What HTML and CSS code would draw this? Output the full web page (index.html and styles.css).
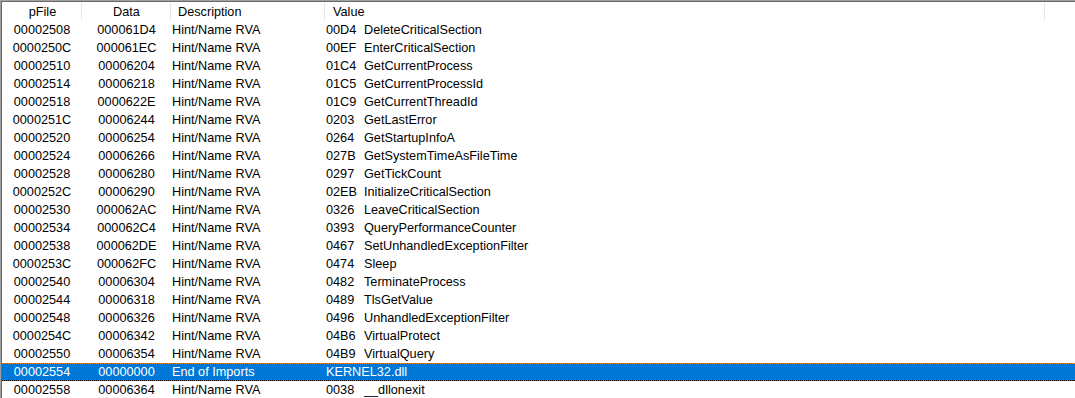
FILE: index.html
```html
<!DOCTYPE html>
<html>
<head>
<meta charset="utf-8">
<link rel="stylesheet" href="styles.css">
</head>
<body>
<div class="frame">
  <div class="inner">
    <div class="row head"><div class="c c1">pFile</div><div class="c c2">Data</div><div class="c c3">Description</div><div class="c c4">Value</div><div class="c c5"></div></div>
    <div class="row"><div class="c c1">00002508</div><div class="c c2">000061D4</div><div class="c c3">Hint/Name RVA</div><div class="c c4"><span class="h">00D4</span>DeleteCriticalSection</div></div>
    <div class="row"><div class="c c1">0000250C</div><div class="c c2">000061EC</div><div class="c c3">Hint/Name RVA</div><div class="c c4"><span class="h">00EF</span>EnterCriticalSection</div></div>
    <div class="row"><div class="c c1">00002510</div><div class="c c2">00006204</div><div class="c c3">Hint/Name RVA</div><div class="c c4"><span class="h">01C4</span>GetCurrentProcess</div></div>
    <div class="row"><div class="c c1">00002514</div><div class="c c2">00006218</div><div class="c c3">Hint/Name RVA</div><div class="c c4"><span class="h">01C5</span>GetCurrentProcessId</div></div>
    <div class="row"><div class="c c1">00002518</div><div class="c c2">0000622E</div><div class="c c3">Hint/Name RVA</div><div class="c c4"><span class="h">01C9</span>GetCurrentThreadId</div></div>
    <div class="row"><div class="c c1">0000251C</div><div class="c c2">00006244</div><div class="c c3">Hint/Name RVA</div><div class="c c4"><span class="h">0203</span>GetLastError</div></div>
    <div class="row"><div class="c c1">00002520</div><div class="c c2">00006254</div><div class="c c3">Hint/Name RVA</div><div class="c c4"><span class="h">0264</span>GetStartupInfoA</div></div>
    <div class="row"><div class="c c1">00002524</div><div class="c c2">00006266</div><div class="c c3">Hint/Name RVA</div><div class="c c4"><span class="h">027B</span>GetSystemTimeAsFileTime</div></div>
    <div class="row"><div class="c c1">00002528</div><div class="c c2">00006280</div><div class="c c3">Hint/Name RVA</div><div class="c c4"><span class="h">0297</span>GetTickCount</div></div>
    <div class="row"><div class="c c1">0000252C</div><div class="c c2">00006290</div><div class="c c3">Hint/Name RVA</div><div class="c c4"><span class="h">02EB</span>InitializeCriticalSection</div></div>
    <div class="row"><div class="c c1">00002530</div><div class="c c2">000062AC</div><div class="c c3">Hint/Name RVA</div><div class="c c4"><span class="h">0326</span>LeaveCriticalSection</div></div>
    <div class="row"><div class="c c1">00002534</div><div class="c c2">000062C4</div><div class="c c3">Hint/Name RVA</div><div class="c c4"><span class="h">0393</span>QueryPerformanceCounter</div></div>
    <div class="row"><div class="c c1">00002538</div><div class="c c2">000062DE</div><div class="c c3">Hint/Name RVA</div><div class="c c4"><span class="h">0467</span>SetUnhandledExceptionFilter</div></div>
    <div class="row"><div class="c c1">0000253C</div><div class="c c2">000062FC</div><div class="c c3">Hint/Name RVA</div><div class="c c4"><span class="h">0474</span>Sleep</div></div>
    <div class="row"><div class="c c1">00002540</div><div class="c c2">00006304</div><div class="c c3">Hint/Name RVA</div><div class="c c4"><span class="h">0482</span>TerminateProcess</div></div>
    <div class="row"><div class="c c1">00002544</div><div class="c c2">00006318</div><div class="c c3">Hint/Name RVA</div><div class="c c4"><span class="h">0489</span>TlsGetValue</div></div>
    <div class="row"><div class="c c1">00002548</div><div class="c c2">00006326</div><div class="c c3">Hint/Name RVA</div><div class="c c4"><span class="h">0496</span>UnhandledExceptionFilter</div></div>
    <div class="row"><div class="c c1">0000254C</div><div class="c c2">00006342</div><div class="c c3">Hint/Name RVA</div><div class="c c4"><span class="h">04B6</span>VirtualProtect</div></div>
    <div class="row"><div class="c c1">00002550</div><div class="c c2">00006354</div><div class="c c3">Hint/Name RVA</div><div class="c c4"><span class="h">04B9</span>VirtualQuery</div></div>
    <div class="row sel"><div class="c c1">00002554</div><div class="c c2">00000000</div><div class="c c3">End of Imports</div><div class="c c4">KERNEL32.dll</div></div>
    <div class="row"><div class="c c1">00002558</div><div class="c c2">00006364</div><div class="c c3">Hint/Name RVA</div><div class="c c4"><span class="h">0038</span>__dllonexit</div></div>
  </div>
</div>
</body>
</html>
```

FILE: styles.css
```css
html, body {
  margin: 0;
  padding: 0;
  background: #ffffff;
  overflow: hidden;
}
body {
  width: 1075px;
  height: 398px;
  font-family: "Liberation Sans", Arial, sans-serif;
  font-size: 12.7px;
  color: #000000;
}
.frame {
  height: 397px;
  border-top: 1px solid #a0a0a0;
  border-left: 1px solid #a0a0a0;
}
.inner {
  height: 396px;
  border-top: 1px solid #696969;
  border-left: 1px solid #696969;
}
.row {
  display: grid;
  grid-template-columns: 80px 89px 154px 720px 1fr;
  height: 18px;
  white-space: nowrap;
}
.c {
  overflow: hidden;
  padding-top: 1px;
  line-height: 17px;
}
.c1, .c2 {
  text-align: center;
}
.c3, .c4 {
  padding-left: 1px;
}
.h {
  display: inline-block;
  width: 38px;
}
.head {
  height: 19px;
}
.head .c {
  padding-top: 2px;
}
.head .c1, .head .c2, .head .c3, .head .c4 {
  background-image: linear-gradient(#e5e5e5, #e5e5e5);
  background-repeat: no-repeat;
  background-size: 1px 17px;
  background-position: right 1px;
}
.head .c1 {
  padding-left: 1px;
}
.head .c3 {
  padding-left: 7px;
}
.head .c4 {
  padding-left: 8px;
}
.sel {
  background-color: #0078d7;
  color: #ffffff;
  height: 17px;
  border-bottom: 1px dotted #000000;
  background-image: repeating-linear-gradient(90deg, #f58c28 0 1px, #0078d7 1px 2px);
  background-size: 100% 1px;
  background-repeat: no-repeat;
}
.sel .c {
  line-height: 16px;
}
```
